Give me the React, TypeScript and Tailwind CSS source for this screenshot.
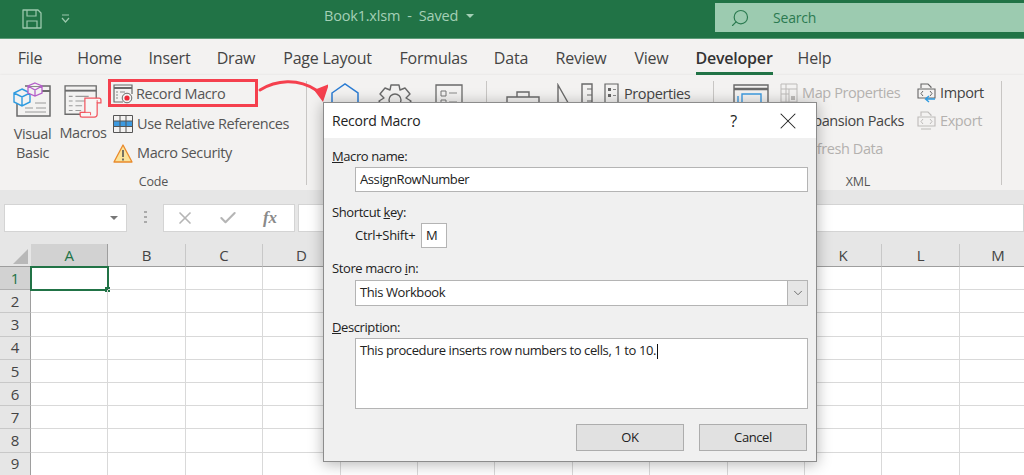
import { X, Check, ChevronDown, Search } from "lucide-react";
import type { ReactNode } from "react";

const tabs = [
  { name: "File", w: "w-[60px]" },
  { name: "Home", w: "w-[79px]" },
  { name: "Insert", w: "w-[61px]" },
  { name: "Draw", w: "w-[72px]" },
  { name: "Page Layout", w: "w-[111px]" },
  { name: "Formulas", w: "w-[101px]" },
  { name: "Data", w: "w-[54px]" },
  { name: "Review", w: "w-[86px]" },
  { name: "View", w: "w-[55px]" },
];

// E to J sit behind the dialog, so they have no visible heading
const columns = ["A", "B", "C", "D", "", "", "", "", "", "", "K", "L", "M"];
const rows = [1, 2, 3, 4, 5, 6, 7, 8, 9];

function VisualBasicIcon() {
  return (
    <svg width="40" height="36" viewBox="0 0 40 36" fill="none">
      <path d="M12 4H37V34H4V20" stroke="#6a6a6a" strokeWidth="1.5" />
      <path d="M24 9H37" stroke="#6a6a6a" strokeWidth="2" />
      <path d="M12 26H20M23 26H33M22 21H33M12 30H33" stroke="#9a9a9a" strokeWidth="1" />
      <path d="M9 7L17 11V20L9 24L1 20V11Z M1 11L9 15L17 11 M9 15V24" stroke="#2f9be0" strokeWidth="1.4" fill="#f3f2f1" />
      <path d="M22 1L29 4V11L22 14L15 11V4Z M15 4L22 8L29 4 M22 8V14" stroke="#b45ec9" strokeWidth="1.3" fill="#f3f2f1" />
    </svg>
  );
}

function MacrosIcon() {
  return (
    <svg width="38" height="34" viewBox="0 0 40 36" fill="none">
      <path d="M1 1H34V31H1Z" stroke="#6a6a6a" strokeWidth="1.4" />
      <path d="M1 6H34" stroke="#6a6a6a" strokeWidth="2" />
      <path d="M5 12H9M12 12H26M5 17H9M12 17H22M5 22H9M12 22H19M5 27H9M12 27H18" stroke="#9a9a9a" strokeWidth="1.2" />
      <path d="M22 14H37C38 14 39 15 39 16V19H35V31C35 33 34 34 32 34H19C18 34 17 33 17 32V29H22Z" fill="#f7f6f5" stroke="#f2555f" strokeWidth="1.3" />
      <path d="M35 16V19M22 29H28V32" stroke="#f2555f" strokeWidth="1" />
    </svg>
  );
}

function RecordIcon() {
  return (
    <svg width="20" height="20" viewBox="0 0 20 20" fill="none">
      <path d="M10 18H1V1H19V10" stroke="#6a6a6a" strokeWidth="1.2" />
      <path d="M1 4H19" stroke="#6a6a6a" strokeWidth="2" />
      <path d="M3 8H5M7 8H12M3 11H5M3 14H5" stroke="#8a8a8a" strokeWidth="1.1" />
      <circle cx="14" cy="14" r="4.8" fill="#f3f2f1" stroke="#6a6a6a" strokeWidth="1" />
      <circle cx="14" cy="14" r="2.6" fill="#ee2b3a" />
    </svg>
  );
}

function TableIcon() {
  return (
    <svg width="20" height="18" viewBox="0 0 20 18" fill="none">
      <rect x="0.5" y="6" width="19" height="5.5" fill="#3d9ae0" />
      <path d="M0.5 0.5H19.5V17.5H0.5ZM7 0.5V17.5M13 0.5V17.5M0.5 6H19.5M0.5 11.5H19.5" stroke="#555" strokeWidth="1" />
    </svg>
  );
}

function WarningIcon() {
  return (
    <svg width="20" height="19" viewBox="0 0 20 19" fill="none">
      <path d="M10 1L19 18H1Z" fill="#fbe39a" stroke="#e98a2b" strokeWidth="1.3" strokeLinejoin="round" />
      <path d="M10 6V13M10 14.5V16.5" stroke="#555" strokeWidth="1.6" />
    </svg>
  );
}

function AddinsIcons() {
  return (
    <div className="flex items-start pt-[8px] pl-[24px]">
      <svg width="28" height="30" viewBox="0 0 28 30" fill="none">
        <path d="M1 10L14 1L27 10V29H1Z" stroke="#2b7cd3" strokeWidth="1.5" />
      </svg>
      <svg className="ml-[18px]" width="36" height="36" viewBox="0 0 36 36" fill="none">
        <path d="M14 2H22L23 7L28 5L33 11L29 15L34 18L30 24H6L2 18L7 15L3 11L8 5L13 7Z" stroke="#6a6a6a" strokeWidth="1.4" strokeLinejoin="round" />
        <circle cx="18" cy="17" r="6" stroke="#6a6a6a" strokeWidth="1.4" />
      </svg>
      <svg className="ml-[22px] mt-[1px]" width="28" height="32" viewBox="0 0 28 32" fill="none">
        <path d="M1 1H27V31H1Z" stroke="#6a6a6a" strokeWidth="1.3" />
        <path d="M6 7H11V12H6ZM6 16H11V21H6Z" stroke="#777" strokeWidth="1" />
        <path d="M14 9H22M14 18H22" stroke="#888" strokeWidth="1.2" />
      </svg>
    </div>
  );
}

function ControlsIcons() {
  return (
    <div className="flex items-start pt-[8px] pl-[19px]">
      <svg className="mt-[7px]" width="34" height="26" viewBox="0 0 34 26" fill="none">
        <path d="M1 7H33V25H1ZM11 7V2H23V7" stroke="#6a6a6a" strokeWidth="1.4" />
      </svg>
      <svg className="ml-[17px]" width="36" height="34" viewBox="0 0 36 34" fill="none">
        <path d="M1 2V32L18 32Z" stroke="#6a6a6a" strokeWidth="1.4" />
        <path d="M25 1H35V32H25Z" stroke="#6a6a6a" strokeWidth="1.4" />
        <path d="M30 6H35M30 12H35M30 18H35" stroke="#6a6a6a" strokeWidth="1.2" />
      </svg>
      <div className="ml-[11px] flex h-[22px] items-center gap-[5px] text-[14.5px] tracking-[-0.4px] text-[#444]">
        <svg width="15" height="22" viewBox="0 0 15 22" fill="none">
          <path d="M1 1H14V21H1Z" stroke="#666" strokeWidth="1.2" />
          <path d="M4 5H7V8H4ZM4 11H7V14H4Z" fill="#666" />
          <path d="M9 6.5H12M9 12.5H12" stroke="#888" strokeWidth="1.2" />
        </svg>
        Properties
      </div>
    </div>
  );
}

function Group({ label, width, children }: { label: string; width: string; children: ReactNode }) {
  return (
    <div className={width + " relative flex shrink-0 flex-col"}>
      <div className="min-h-0 flex-1">{children}</div>
      <div className="h-[18px] text-center text-[12.5px] leading-[20px] text-[#555]">{label}</div>
      <div className="absolute top-[6px] right-0 bottom-[5px] w-px bg-[#c8c6c4]" />
    </div>
  );
}

function Field({ children }: { children: ReactNode }) {
  return <div className="border border-[#b4b4b4] bg-white text-[13px] text-[#222]">{children}</div>;
}

export default function App() {
  return (
    <div className="relative h-[475px] w-[1024px] overflow-hidden bg-white font-['Open_Sans',sans-serif] tracking-[-0.2px]">
      {/* title bar */}
      <div className="flex h-[39px] items-start border-b border-[#5d9b78] bg-[#217346]">
        <svg className="mt-[9px] ml-[22px]" width="20" height="20" viewBox="0 0 20 20" fill="none">
          <path d="M1 1H16L19 4V19H1Z" stroke="#9cc9ad" strokeWidth="1.3" strokeLinejoin="round" />
          <path d="M5 1V7H14V1M5 19V12H15V19" stroke="#9cc9ad" strokeWidth="1.2" />
        </svg>
        <svg className="mt-[14px] ml-[19px]" width="9" height="9" viewBox="0 0 9 9" fill="none">
          <path d="M1 1H8" stroke="#9cc9ad" strokeWidth="1" />
          <path d="M1 4L4.5 8L8 4" stroke="#9cc9ad" strokeWidth="1.2" />
        </svg>
        <div className="mt-[6px] ml-[254px] flex items-center text-[14.5px] leading-[20px] text-[#a4d0b6]">
          Book1.xlsm&nbsp; - &nbsp;Saved
          <div className="ml-[8px] h-0 w-0 border-x-[4px] border-t-[4px] border-x-transparent border-t-[#a4d0b6]" />
        </div>
        <div className="mt-[3px] ml-auto flex h-[29px] w-[309px] items-center bg-[#9ccbb0] pl-[15px] text-[14px] text-[#2b7a50]">
          <Search className="-scale-x-100" size={20} strokeWidth={1.4} />
          <span className="ml-[23px]">Search</span>
        </div>
      </div>

      {/* tabs */}
      <div className="flex h-[36px] items-start bg-[#f3f2f1] text-[16px] text-[#444]">
        {tabs.map((t) => (
          <div key={t.name} className={t.w + " pt-[7px] text-center leading-[24px]"}>
            {t.name}
          </div>
        ))}
        <div className="flex w-[110px] flex-col items-center pt-[7px] leading-[24px] font-semibold text-[#333]">
          Developer
          <div className="mt-[2px] h-[3px] w-[77px] bg-[#217346]" />
        </div>
        <div className="w-[51px] pt-[7px] text-center leading-[24px]">Help</div>
      </div>

      {/* ribbon */}
      <div className="flex h-[115px] bg-[#f3f2f1] shadow-[0_1px_3px_rgba(0,0,0,0.18)]">
        <Group label="Code" width="w-[307px]">
          <div className="flex pt-[4px] text-[14.5px] tracking-[-0.4px] text-[#555]">
            <div className="flex w-[62px] flex-col items-center pt-[3px] pl-[3px] leading-[19px]">
              <VisualBasicIcon />
              <div className="mt-[6px] text-center">
                Visual
                <br />
                Basic
              </div>
            </div>
            <div className="flex w-[46px] flex-col items-center pt-[6px] pr-[4px] leading-[19px]">
              <MacrosIcon />
              <div className="mt-[4px]">Macros</div>
            </div>
            <div className="flex flex-col gap-[2px]">
              <div className="flex h-[28px] w-[150px] items-center gap-[3px] border-[3px] border-[#f5404e] pt-[1px] pl-[2px]">
                <RecordIcon />
                Record Macro
              </div>
              <div className="flex h-[28px] items-center gap-[4px] pt-[1px] pl-[5px]">
                <TableIcon />
                Use Relative References
              </div>
              <div className="flex h-[28px] items-center gap-[4px] pl-[5px]">
                <WarningIcon />
                Macro Security
              </div>
            </div>
          </div>
        </Group>
        <Group label="" width="w-[180px]">
          <AddinsIcons />
        </Group>
        <Group label="" width="w-[227px]">
          <ControlsIcons />
        </Group>
        <Group label="XML" width="w-[288px]">
          <div className="flex pt-[4px] pl-[19px] text-[14.5px] tracking-[-0.4px]">
            <svg className="mt-[5px]" width="36" height="34" viewBox="0 0 36 34" fill="none">
              <path d="M1 1H35V33H1Z" stroke="#6a6a6a" strokeWidth="1.4" />
              <path d="M1 5H35" stroke="#6a6a6a" strokeWidth="2.5" />
              <path d="M9 10H28V20H9ZM5 12V28H14V23H5" stroke="#3d9ae0" strokeWidth="1.4" />
            </svg>
            <div className="ml-[11px] flex w-[124px] flex-col text-[#b3b1af]">
              <div className="flex h-[28px] items-center gap-[4px] whitespace-nowrap">
                <svg className="shrink-0" width="18" height="20" viewBox="0 0 18 20" fill="none">
                  <path d="M1 1H17V19H1ZM1 6H17M1 11H9M6 1V19M9 6V19" stroke="#bdbbb9" strokeWidth="1" />
                  <path d="M11 13H15V17H11Z" fill="#bdbbb9" />
                </svg>
                Map Properties
              </div>
              <div className="flex h-[28px] items-center justify-end text-[#444]">Expansion Packs</div>
              <div className="flex h-[28px] items-center justify-end pr-[21px]">Refresh Data</div>
            </div>
            <div className="ml-[13px] flex flex-col">
              <div className="flex h-[28px] items-center gap-[4px] text-[#444]">
                <svg width="19" height="20" viewBox="0 0 19 20" fill="none">
                  <path d="M4 5V1H11L14 4V5M1 6H18V15H1Z" stroke="#666" strokeWidth="1.1" />
                  <path d="M6 8L4 10.5L6 13M13 8L15 10.5L13 13" stroke="#666" strokeWidth="1" />
                  <path d="M18 16H9M12 13L8.5 16L12 19" stroke="#2f9be0" strokeWidth="1.4" />
                </svg>
                Import
              </div>
              <div className="flex h-[28px] items-center gap-[4px] text-[#b3b1af]">
                <svg width="19" height="20" viewBox="0 0 19 20" fill="none">
                  <path d="M4 5V1H11L14 4V5M1 6H18V15H1ZM4 18H14" stroke="#bdbbb9" strokeWidth="1.1" />
                  <path d="M6 8L4 10.5L6 13M13 8L15 10.5L13 13" stroke="#bdbbb9" strokeWidth="1" />
                </svg>
                Export
              </div>
            </div>
          </div>
        </Group>
      </div>

      {/* formula bar */}
      <div className="flex h-[54px] items-start bg-[#e6e6e6] pt-[14px] pl-[4px]">
        <div className="flex h-[28px] w-[123px] items-center justify-end border border-[#d4d4d4] bg-white pr-[8px]">
          <div className="h-0 w-0 border-x-[4px] border-t-[4px] border-x-transparent border-t-[#777]" />
        </div>
        <div className="flex w-[36px] flex-col items-center gap-[3px] pt-[7px]">
          <div className="h-[2px] w-[3px] bg-[#aaa]" />
          <div className="h-[2px] w-[3px] bg-[#aaa]" />
          <div className="h-[2px] w-[3px] bg-[#aaa]" />
        </div>
        <div className="flex h-[28px] w-[132px] items-center border border-[#d4d4d4] bg-white pl-[11px] text-[#b5b5b5]">
          <X size={20} strokeWidth={2} />
          <Check className="ml-[23px]" size={20} strokeWidth={2.5} />
          <span className="ml-[25px] font-['Liberation_Serif',serif] text-[17px] font-bold text-[#8a8a8a] italic">fx</span>
        </div>
        <div className="ml-[3px] h-[28px] flex-1 border border-[#d4d4d4] bg-white" />
      </div>

      {/* sheet */}
      <div className="grid grid-cols-[31px_repeat(13,77.4px)] text-[15px] text-[#444]">
        <div className="relative h-[23px] border-b border-[#9e9e9e] bg-[#e6e6e6]">
          <div className="absolute right-[3px] bottom-[2px] h-0 w-0 border-b-[15px] border-l-[15px] border-b-[#b8b8b8] border-l-transparent" />
        </div>
        {columns.map((c, i) => (
          <div
            key={i}
            className={
              c === "A"
                ? "flex h-[23px] items-center justify-center border-r border-b border-[#9e9e9e] bg-[#d2d2d2] text-[#217346]"
                : "flex h-[23px] items-center justify-center border-r border-b border-r-[#c8c8c8] border-b-[#9e9e9e] bg-[#e6e6e6]"
            }
          >
            {c}
          </div>
        ))}
        {rows.map((r) => (
          <div key={r} className="contents">
            <div
              className={
                r === 1
                  ? "flex h-[23.2px] items-center justify-center border-r border-b border-[#b0b0b0] bg-[#d2d2d2] text-[#217346]"
                  : "flex h-[23.2px] items-center justify-center border-r border-b border-r-[#9e9e9e] border-b-[#c8c8c8] bg-[#e6e6e6]"
              }
            >
              {r}
            </div>
            {columns.map((c, i) => (
              <div key={i} className="relative h-[23.2px] border-r border-b border-[#d9d9d9]">
                {r === 1 && c === "A" && (
                  <div className="absolute -top-px -left-px h-[25px] w-[79px] border-2 border-[#217346]">
                    <div className="absolute -right-[3px] -bottom-[3px] h-[5px] w-[5px] bg-[#217346]" />
                  </div>
                )}
              </div>
            ))}
          </div>
        ))}
      </div>

      {/* arrow from the Record Macro button to the dialog */}
      <svg className="absolute top-[76px] left-[256px]" width="72" height="28" viewBox="0 0 72 28" fill="none">
        <path d="M4 14C20 4 42 2 60 14" stroke="#f5404e" strokeWidth="3" strokeLinecap="round" />
        <path d="M58 14L73 8L67 26Z" fill="#f5404e" />
      </svg>

      {/* Record Macro dialog */}
      <div className="absolute top-[102px] left-[323px] h-[360px] w-[494px] border border-[#8c8c8c] bg-[#f0f0f0] text-[13px] tracking-[-0.4px] text-[#222] shadow-[0_2px_14px_rgba(0,0,0,0.3)]">
        <div className="flex h-[35px] items-center bg-white pl-[8px] text-[14px] tracking-[-0.2px]">
          Record Macro
          <span className="ml-auto text-[16px]">?</span>
          <X className="mr-[14px] ml-[37px]" size={28} strokeWidth={0.9} />
        </div>
        <div className="flex flex-col pt-[8px] pl-[8px]">
          <div className="h-[21px] leading-[21px]">
            <span className="underline">M</span>acro name:
          </div>
          <div className="ml-[23px] w-[453px]">
            <Field>
              <div className="flex h-[23px] items-center pl-[4px]">AssignRowNumber</div>
            </Field>
          </div>
          <div className="mt-[10px] h-[21px] leading-[21px]">
            Shortcut <span className="underline">k</span>ey:
          </div>
          <div className="ml-[23px] flex h-[25px] items-center">
            <span className="w-[66px] tracking-[-0.3px]">Ctrl+Shift+</span>
            <div className="w-[26px]">
              <Field>
                <div className="flex h-[23px] items-center pl-[4px]">M</div>
              </Field>
            </div>
          </div>
          <div className="mt-[10px] h-[21px] leading-[21px]">
            Store macro <span className="underline">i</span>n:
          </div>
          <div className="mt-px ml-[23px] w-[453px]">
            <Field>
              <div className="flex h-[24px] items-center justify-between pl-[4px]">
                This Workbook
                <div className="flex h-[24px] w-[20px] items-center justify-center border-l border-[#b4b4b4] bg-[#e6e6e6]">
                  <ChevronDown className="text-[#666]" size={14} strokeWidth={1.6} />
                </div>
              </div>
            </Field>
          </div>
          <div className="mt-[11px] h-[21px] leading-[21px]">
            <span className="underline">D</span>escription:
          </div>
          <div className="ml-[23px] w-[453px]">
            <Field>
              <div className="h-[69px] px-[4px] pt-[1px] leading-[20px]">
                This procedure inserts row numbers to cells, 1 to 10.
                <span className="ml-px inline-block h-[15px] w-px bg-[#111] align-middle" />
              </div>
            </Field>
          </div>
          <div className="mt-[15px] ml-[244px] flex gap-[15px]">
            <div className="flex h-[27px] w-[108px] items-center justify-center border border-[#adadad] bg-[#e1e1e1]">OK</div>
            <div className="flex h-[27px] w-[108px] items-center justify-center border border-[#adadad] bg-[#e1e1e1]">Cancel</div>
          </div>
        </div>
      </div>
    </div>
  );
}
